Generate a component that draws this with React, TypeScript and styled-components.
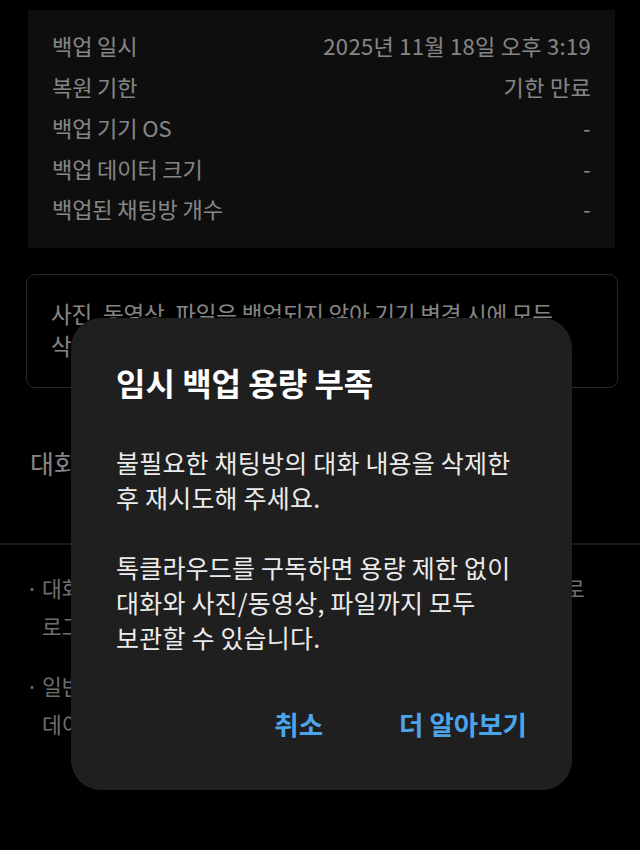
import React from 'react';
import styled, { createGlobalStyle } from 'styled-components';

const GlobalStyle = createGlobalStyle`
  html, body {
    margin: 0;
    padding: 0;
    background: #000;
  }
  body {
    font-family: "Noto Sans CJK KR", "Noto Sans", sans-serif;
    -webkit-font-smoothing: antialiased;
  }
`

const Page = styled.div`
  width: 640px;
  min-height: 850px;
  background: #000;
  padding-top: 10px;
  box-sizing: border-box;
  overflow: hidden;
`

const InfoCard = styled.div`
  margin: 0 25px 0 28px;
  background: #1a1a1a;
  padding: 15px 24px 19px 24px;
`

const InfoRow = styled.div`
  display: flex;
  justify-content: space-between;
  align-items: center;
  height: 40.75px;
  font-size: 22px;
  color: #f2f2f2;
  letter-spacing: -0.1px;
`

const Value = styled.span`
  letter-spacing: 0.3px;
`

const NoteBox = styled.div`
  margin: 26px 22px 0 26px;
  border: 1px solid #4a4a4a;
  border-radius: 9px;
  padding: 22px 24px 26px;
  font-size: 22.5px;
  line-height: 32px;
  color: #f2f2f2;
  letter-spacing: -0.2px;
  white-space: nowrap;
`

const SectionTitle = styled.h2`
  margin: 59px 0 0 30px;
  font-size: 26px;
  line-height: 32px;
  font-weight: 400;
  color: #f2f2f2;
`

const Divider = styled.div`
  height: 2px;
  background: #333;
  margin-top: 64px;
`

const BulletList = styled.ul`
  list-style: none;
  margin: 24px 0 0;
  padding: 0 0 0 26px;
  display: flex;
  flex-direction: column;
  gap: 22px;
`

const Bullet = styled.li`
  position: relative;
  padding-left: 16px;
  font-size: 21.5px;
  line-height: 38px;
  color: #c8c8c8;
  white-space: nowrap;
  &::before {
    content: '·';
    position: absolute;
    left: 0;
    top: 0;
  }
`

const Dim = styled.div`
  position: fixed;
  inset: 0;
  background: rgba(0, 0, 0, 0.45);
  display: flex;
  justify-content: center;
  align-items: flex-start;
  padding-top: 318px;
  box-sizing: border-box;
`

const Dialog = styled.div`
  width: 501px;
  margin-left: 3px;
  box-sizing: border-box;
  background: #1f1f1f;
  border-radius: 30px;
  padding: 47px 45px 51px;
`

const DialogTitle = styled.h1`
  margin: 0;
  font-size: 32px;
  line-height: 34px;
  font-weight: 700;
  color: #fff;
`

const DialogBody = styled.p`
  margin: 46px 0 0;
  font-size: 25px;
  line-height: 35px;
  color: #ebebeb;
  letter-spacing: 0.2px;
  white-space: pre-line;
`

const Actions = styled.div`
  display: flex;
  justify-content: flex-end;
  gap: 76px;
  margin-top: 54px;
`

const ActionButton = styled.button`
  background: none;
  border: 0;
  padding: 0;
  font-family: inherit;
  font-size: 26.5px;
  line-height: 30px;
  font-weight: 700;
  color: #4ba5ec;
  cursor: pointer;
`

const rows = [
  ['백업 일시', '2025년 11월 18일 오후 3:19'],
  ['복원 기한', '기한 만료'],
  ['백업 기기 OS', '-'],
  ['백업 데이터 크기', '-'],
  ['백업된 채팅방 개수', '-'],
]

export default function App() {
  return (
    <>
      <GlobalStyle />
      <Page>
        <InfoCard>
          {rows.map(([label, value]) => (
            <InfoRow key={label}>
              <span>{label}</span>
              <Value>{value}</Value>
            </InfoRow>
          ))}
        </InfoCard>
        <NoteBox>
          사진, 동영상, 파일은 백업되지 않아 기기 변경 시에 모두
          <br />
          삭제됩니다.
        </NoteBox>
        <SectionTitle>대화 백업 유의사항</SectionTitle>
        <Divider />
        <BulletList>
          <Bullet>
            대화 내용 백업 시 설정한 비밀번호는 분실 시 찾을 수 없으므로
            <br />
            로그인 전에 꼭 기억해 주세요.
          </Bullet>
          <Bullet>
            일반 채팅방의 대화만 백업되며 오픈채팅방의
            <br />
            데이터는 백업되지 않습니다.
          </Bullet>
        </BulletList>
      </Page>
      <Dim>
        <Dialog>
          <DialogTitle>임시 백업 용량 부족</DialogTitle>
          <DialogBody>
            {'불필요한 채팅방의 대화 내용을 삭제한\n후 재시도해 주세요.\n\n톡클라우드를 구독하면 용량 제한 없이\n대화와 사진/동영상, 파일까지 모두\n보관할 수 있습니다.'}
          </DialogBody>
          <Actions>
            <ActionButton>취소</ActionButton>
            <ActionButton>더 알아보기</ActionButton>
          </Actions>
        </Dialog>
      </Dim>
    </>
  );
}
